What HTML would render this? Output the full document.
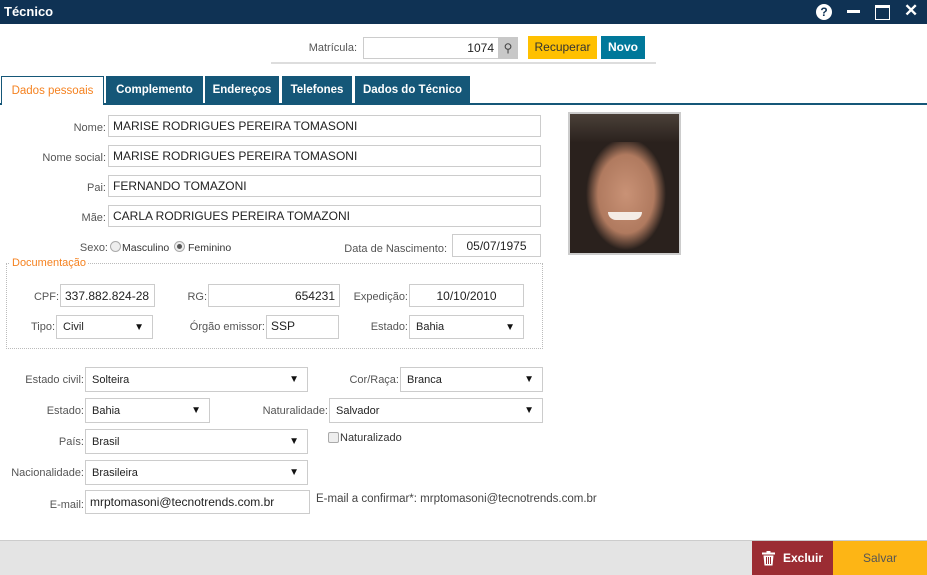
<!DOCTYPE html>
<html><head><meta charset="utf-8"><style>
*{box-sizing:border-box;margin:0;padding:0}
body{width:927px;height:575px;position:relative;overflow:hidden;background:#fff;font-family:"Liberation Sans",sans-serif;color:#333}
.a{position:absolute}
.l{position:absolute;font-size:11px;color:#555;white-space:nowrap;text-align:right}
.i{position:absolute;border:1px solid #ccc;background:#fff;font-size:12px;color:#222;padding:0 4px;white-space:nowrap;display:flex;align-items:center}
.r{justify-content:flex-end}
.c{justify-content:center}
.s{position:absolute;border:1px solid #ccc;background:#fff;font-size:11px;color:#222;padding:0 6px;display:flex;align-items:center}
.s:after{content:"▼";position:absolute;right:8px;font-size:10px;color:#111}
.t{position:absolute;top:76px;height:28px;background:#155778;color:#fff;font-size:11.5px;font-weight:bold;display:flex;align-items:center;justify-content:center}
</style></head><body>
<div class="a" style="left:0;top:0;width:927px;height:24px;background:#0f3254"></div>
<div class="a" style="left:4px;top:4px;color:#fff;font-size:13px;font-weight:bold">Técnico</div>
<div class="a" style="left:816px;top:4px;width:16px;height:16px;border-radius:50%;background:#fff;color:#0f3254;font-size:12px;font-weight:bold;text-align:center;line-height:16px">?</div>
<div class="a" style="left:847px;top:10px;width:13px;height:3px;background:#fff"></div>
<div class="a" style="left:875px;top:5px;width:15px;height:15px;border:1px solid #fff;border-top-width:3px"></div>
<div class="a" style="left:904px;top:1px;color:#fff;font-size:17px;font-weight:bold">✕</div>

<div class="l" style="right:570px;top:42px">Matrícula:</div>
<div class="i r" style="left:363px;top:37px;width:136px;height:22px">1074</div>
<div class="a" style="left:498px;top:37px;width:20px;height:22px;background:#c8c8c8;color:#444;font-size:12px;text-align:center;line-height:22px">⚲</div>
<div class="a" style="left:528px;top:36px;width:69px;height:23px;background:#ffc000;font-size:12px;color:#333;text-align:center;line-height:23px">Recuperar</div>
<div class="a" style="left:601px;top:36px;width:44px;height:23px;background:#00789a;font-size:12px;color:#fff;font-weight:bold;text-align:center;line-height:23px">Novo</div>
<div class="a" style="left:271px;top:62px;width:385px;height:2px;background:#ddd"></div>

<div class="a" style="left:0;top:103px;width:927px;height:2px;background:#155778"></div>
<div class="a" style="left:1px;top:76px;width:103px;height:29px;background:#fff;border:1px solid #155778;border-bottom:none;color:#f58220;font-size:11.5px;display:flex;align-items:center;justify-content:center">Dados pessoais</div>
<div class="t" style="left:106px;width:97px">Complemento</div>
<div class="t" style="left:205px;width:74px">Endereços</div>
<div class="t" style="left:282px;width:70px">Telefones</div>
<div class="t" style="left:355px;width:115px">Dados do Técnico</div>

<div class="l" style="right:821px;top:122px">Nome:</div>
<div class="i" style="left:108px;top:115px;width:433px;height:22px">MARISE RODRIGUES PEREIRA TOMASONI</div>
<div class="l" style="right:821px;top:152px">Nome social:</div>
<div class="i" style="left:108px;top:145px;width:433px;height:22px">MARISE RODRIGUES PEREIRA TOMASONI</div>
<div class="l" style="right:821px;top:182px">Pai:</div>
<div class="i" style="left:108px;top:175px;width:433px;height:22px">FERNANDO TOMAZONI</div>
<div class="l" style="right:821px;top:212px">Mãe:</div>
<div class="i" style="left:108px;top:205px;width:433px;height:22px">CARLA RODRIGUES PEREIRA TOMAZONI</div>

<div class="l" style="right:819px;top:242px">Sexo:</div>
<div class="a" style="left:110px;top:241px;width:11px;height:11px;border:1px solid #aaa;border-radius:50%;background:#eee"></div>
<div class="l" style="left:122px;top:242px;color:#333;font-size:10.5px">Masculino</div>
<div class="a" style="left:174px;top:241px;width:11px;height:11px;border:1px solid #aaa;border-radius:50%;background:#eee"><div class="a" style="left:2px;top:2px;width:5px;height:5px;border-radius:50%;background:#555"></div></div>
<div class="l" style="left:188px;top:242px;color:#333;font-size:10.5px">Feminino</div>
<div class="l" style="right:480px;top:243px">Data de Nascimento:</div>
<div class="i c" style="left:452px;top:234px;width:89px;height:23px">05/07/1975</div>

<div class="a" style="left:568px;top:112px;width:113px;height:143px;border:2px solid #ccc;background:radial-gradient(ellipse 40px 56px at 56px 80px,#c99276 0,#b07a5f 70%,#2a211d 100%)">
<div class="a" style="left:0;top:0;width:109px;height:28px;background:linear-gradient(#4a4038,#2b221e)"></div>
<div class="a" style="left:38px;top:98px;width:34px;height:8px;border-radius:0 0 14px 14px;background:#f4ece6"></div>
</div>

<div class="a" style="left:6px;top:263px;width:537px;height:86px;border:1px dotted #bbb"></div>
<div class="a" style="left:10px;top:257px;background:#fff;padding:0 2px;color:#f58220;font-size:11px">Documentação</div>
<div class="l" style="right:868px;top:291px">CPF:</div>
<div class="i" style="left:60px;top:284px;width:95px;height:23px">337.882.824-28</div>
<div class="l" style="right:720px;top:291px">RG:</div>
<div class="i r" style="left:208px;top:284px;width:132px;height:23px">654231</div>
<div class="l" style="right:519px;top:291px">Expedição:</div>
<div class="i c" style="left:409px;top:284px;width:115px;height:23px">10/10/2010</div>
<div class="l" style="right:872px;top:321px">Tipo:</div>
<div class="s" style="left:56px;top:315px;width:97px;height:24px">Civil</div>
<div class="l" style="right:662px;top:321px">Órgão emissor:</div>
<div class="i" style="left:266px;top:315px;width:73px;height:24px;align-items:flex-start;padding-top:3px">SSP</div>
<div class="l" style="right:519px;top:321px">Estado:</div>
<div class="s" style="left:409px;top:315px;width:115px;height:24px">Bahia</div>

<div class="l" style="right:843px;top:374px">Estado civil:</div>
<div class="s" style="left:85px;top:367px;width:223px;height:25px">Solteira</div>
<div class="l" style="right:528px;top:374px">Cor/Raça:</div>
<div class="s" style="left:400px;top:367px;width:143px;height:25px">Branca</div>
<div class="l" style="right:843px;top:405px">Estado:</div>
<div class="s" style="left:85px;top:398px;width:125px;height:25px">Bahia</div>
<div class="l" style="right:599px;top:405px">Naturalidade:</div>
<div class="s" style="left:329px;top:398px;width:214px;height:25px">Salvador</div>
<div class="l" style="right:843px;top:436px">País:</div>
<div class="s" style="left:85px;top:429px;width:223px;height:25px">Brasil</div>
<div class="a" style="left:328px;top:432px;width:11px;height:11px;border:1px solid #aaa;border-radius:2px;background:#eee"></div>
<div class="l" style="left:340px;top:432px;color:#333">Naturalizado</div>
<div class="l" style="right:843px;top:467px">Nacionalidade:</div>
<div class="s" style="left:85px;top:460px;width:223px;height:25px">Brasileira</div>
<div class="l" style="right:843px;top:499px">E-mail:</div>
<div class="i" style="left:85px;top:490px;width:225px;height:24px">mrptomasoni@tecnotrends.com.br</div>
<div class="l" style="left:316px;top:493px;font-size:11.5px;color:#444">E-mail a confirmar*: mrptomasoni@tecnotrends.com.br</div>

<div class="a" style="left:0;top:540px;width:927px;height:35px;background:#e4e4e4;border-top:1px solid #ccc"></div>
<div class="a" style="left:752px;top:541px;width:81px;height:34px;background:#9b2c33;color:#fff;font-size:12px;font-weight:bold;display:flex;align-items:center;justify-content:center;gap:8px"><svg width="13" height="15" viewBox="0 0 13 15"><rect x="0" y="1.5" width="13" height="2" fill="#fff"/><rect x="4.5" y="0" width="4" height="2" fill="#fff"/><path d="M1.5 4.5h10l-1 10h-8z" fill="#fff"/><path d="M4.5 6v7M6.5 6v7M8.5 6v7" stroke="#9b2c33" stroke-width="1"/></svg>Excluir</div>
<div class="a" style="left:833px;top:541px;width:94px;height:34px;background:#fdb515;color:#555;font-size:12px;display:flex;align-items:center;justify-content:center">Salvar</div>
</body></html>
